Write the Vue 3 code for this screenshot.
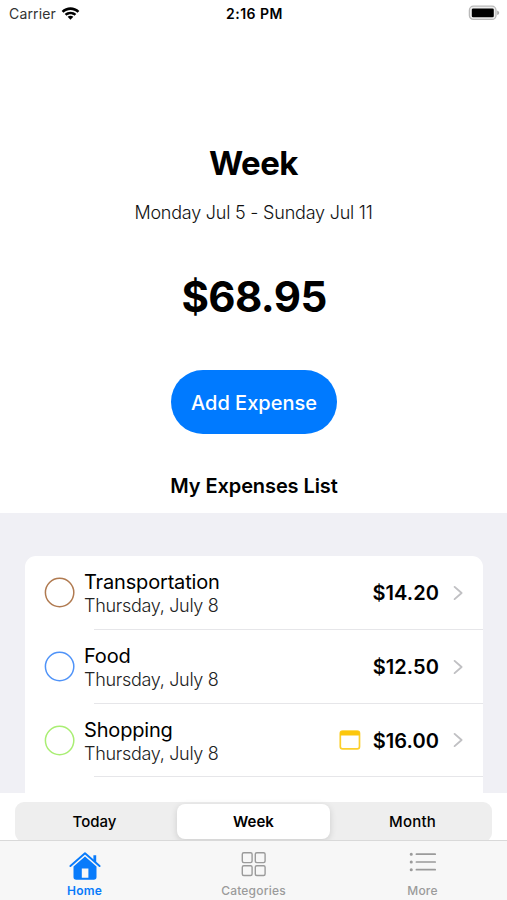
<script setup>
const expenses = [
  { name: 'Transportation', date: 'Thursday, July 8', amount: '$14.20', tone: 'brown', recurring: false },
  { name: 'Food', date: 'Thursday, July 8', amount: '$12.50', tone: 'blue', recurring: false },
  { name: 'Shopping', date: 'Thursday, July 8', amount: '$16.00', tone: 'green', recurring: true },
]
const periods = ['Today', 'Week', 'Month']
</script>

<template>
  <div class="screen">
    <header class="status">
      <div class="carrier">
        <span>Carrier</span>
        <svg class="wifi" viewBox="0 0 18 14" width="19" height="15">
          <path d="M0.6 4.6C5.2 0 12.8 0 17.4 4.6L15.6 6.4C11.9 2.9 6.1 2.9 2.4 6.4Z" />
          <path d="M3.5 7.4C6.5 4.5 11.5 4.5 14.5 7.4L12.7 9.2C10.7 7.3 7.3 7.3 5.3 9.2Z" />
          <path d="M6.3 10.1C7.8 8.8 10.2 8.8 11.7 10.1L9 12.9Z" />
        </svg>
      </div>
      <span class="time">2:16 PM</span>
      <svg class="battery" viewBox="0 0 32 16" width="32" height="16">
        <rect x="1.4" y="1.2" width="26.6" height="13.2" rx="4" fill="#eee" stroke="#b9b9b9" stroke-width="1.3" />
        <rect x="3.8" y="3.4" width="22" height="8.9" rx="1.4" fill="#000" />
        <path d="M29.2 5.5Q31.2 6.2 31.2 7.8T29.2 10.1Z" fill="#aaa" />
      </svg>
    </header>

    <section class="summary">
      <h1>Week</h1>
      <p class="range">Monday Jul 5 - Sunday Jul 11</p>
      <p class="total">$68.95</p>
      <button class="add">Add Expense</button>
      <h2>My Expenses List</h2>
    </section>

    <main class="list">
      <div class="card">
        <article v-for="e in expenses" :key="e.name" class="row">
          <svg class="ring" :class="e.tone" viewBox="0 0 31 31" width="31" height="31">
            <circle cx="15.6" cy="15.5" r="14.2" fill="none" stroke="currentColor" stroke-width="1.5" />
          </svg>
          <div class="body">
            <div class="name">{{ e.name }}</div>
            <div class="date">{{ e.date }}</div>
          </div>
          <svg v-if="e.recurring" class="calendar" viewBox="0 0 22 20" width="22" height="20">
            <rect x="1.3" y="1.1" width="19.2" height="17.8" rx="2.4" fill="#fff" stroke="#fccf2b" stroke-width="1.7" />
            <path d="M1 5.6V3.4Q1 1 3.6 1H18.2Q20.8 1 20.8 3.4V5.6Z" fill="#fcc70c" />
          </svg>
          <span class="amount">{{ e.amount }}</span>
          <svg class="chevron" viewBox="0 0 10 16" width="10" height="16">
            <path d="M1.6 1.9L8.6 8L1.6 14.1" fill="none" stroke="#c0c0c3" stroke-width="1.9" stroke-linecap="round" stroke-linejoin="round" />
          </svg>
        </article>
      </div>
    </main>

    <div class="periods">
      <div class="segments">
        <span v-for="p in periods" :key="p" class="segment" :class="{ selected: p === 'Week' }">{{ p }}</span>
      </div>
    </div>

    <nav class="tabs">
      <a class="tab active">
        <svg viewBox="0 0 32 30" width="32" height="30">
          <path d="M1.4 15L16 2.2L30.6 15" fill="none" stroke="#087bfb" stroke-width="1.9" stroke-linecap="round" stroke-linejoin="round" />
          <path d="M24.4 4.2H27.2V11.6L24.4 9.2Z" fill="#087bfb" />
          <path fill-rule="evenodd" d="M16 5.6L27.5 15.6V26Q27.5 28.7 24.8 28.7H7.2Q4.5 28.7 4.5 26V15.6ZM12.8 17.4V26.7H19.4V17.4Z" fill="#087bfb" />
        </svg>
        <span>Home</span>
      </a>
      <a class="tab">
        <svg viewBox="0 0 32 30" width="32" height="30" fill="none" stroke="#9b9b9b" stroke-width="1.4">
          <rect x="4.3" y="1.8" width="9.8" height="9.8" rx="1.5" />
          <rect x="17.3" y="1.8" width="9.8" height="9.8" rx="1.5" />
          <rect x="4.3" y="14.7" width="9.8" height="9.8" rx="1.5" />
          <rect x="17.3" y="14.7" width="9.8" height="9.8" rx="1.5" />
        </svg>
        <span>Categories</span>
      </a>
      <a class="tab">
        <svg viewBox="0 0 32 30" width="32" height="30" stroke="#9b9b9b" stroke-linecap="round">
          <path d="M9.4 3.2H28.2M9.4 11H28.2M9.4 18.7H28.2" stroke-width="1.7" />
          <path d="M4.2 3.2H4.3M4.2 11H4.3M4.2 18.7H4.3" stroke-width="3" />
        </svg>
        <span>More</span>
      </a>
    </nav>
  </div>
</template>

<style>
body { margin: 0; background: #fff; }
</style>

<style scoped>
* { box-sizing: border-box; }
.screen {
  width: 507px;
  height: 900px;
  display: flex;
  flex-direction: column;
  overflow: hidden;
  background: #fff;
  color: #000;
  font-family: Inter, "Liberation Sans", sans-serif;
  white-space: nowrap;
}
h1, h2, p { margin: 0; }
.status {
  height: 28px;
  padding: 0 7px 2px 9px;
  display: grid;
  grid-template-columns: 1fr auto 1fr;
  align-items: center;
  font-size: 14px;
}
.carrier { display: flex; align-items: center; gap: 5px; color: #333; letter-spacing: 0.15px; }
.wifi { fill: #000; }
.time { font-weight: 600; letter-spacing: 0.5px; }
.battery { justify-self: end; }
.summary {
  height: 485px;
  display: flex;
  flex-direction: column;
  align-items: center;
}
h1 { margin-top: 115px; font-size: 33px; line-height: 40px; font-weight: 700; letter-spacing: -0.55px; }
.range { margin-top: 18px; font-size: 18px; line-height: 24px; font-weight: 300; color: #111; letter-spacing: -0.22px; }
.total { margin-top: 47px; padding-left: 1px; font-size: 42px; line-height: 50px; font-weight: 700; letter-spacing: -0.6px; }
.add {
  margin-top: 48px;
  width: 166px;
  height: 64px;
  padding: 1px 0 0 1px;
  border: 0;
  border-radius: 32px;
  background: #007aff;
  color: #fff;
  font: 500 20px/24px Inter, "Liberation Sans", sans-serif;
}
h2 { margin-top: 40px; padding-left: 1px; font-size: 20px; line-height: 24px; font-weight: 600; letter-spacing: -0.1px; }
.list { height: 280px; padding: 43px 24px 0 25px; background: #f0f0f5; overflow: hidden; }
.card { height: 240px; border-radius: 11px 11px 0 0; background: #fff; }
.row {
  position: relative;
  height: 73.7px;
  padding: 0 20px 0 19px;
  display: flex;
  align-items: center;
}
.row::after {
  content: "";
  position: absolute;
  left: 69px;
  right: 0;
  bottom: -0.4px;
  height: 1.2px;
  background: #e6e6e9;
}
.ring { flex: none; }
.brown { color: #b07a50; }
.blue { color: #4f93f8; }
.green { color: #a9ee73; }
.body { flex: 1; margin-left: 9px; padding-top: 3px; }
.name { font-size: 20px; line-height: 23px; letter-spacing: -0.17px; }
.date { font-size: 18px; line-height: 23px; font-weight: 300; color: #222; letter-spacing: -0.3px; }
.calendar { margin-right: 12px; }
.amount { font-size: 20px; font-weight: 600; padding-top: 1px; letter-spacing: 0.08px; }
.chevron { margin-left: 14px; }
.periods { height: 47px; padding: 9px 15px 0; overflow: hidden; }
.segments {
  height: 40px;
  padding: 2px 2px 0;
  display: grid;
  grid-template-columns: 1fr 153px 1fr;
  column-gap: 2px;
  border-radius: 9px;
  background: #eee;
}
.segment { height: 35px; display: flex; align-items: center; justify-content: center; font-size: 15px; font-weight: 500; }
.segment:first-child { padding-right: 3px; }
.segment:last-child { padding-left: 3px; letter-spacing: 0.2px; }
.selected { border-radius: 8px; background: #fff; box-shadow: 0 2px 7px rgba(0, 0, 0, 0.14); font-weight: 600; }
.tabs {
  height: 60px;
  display: grid;
  grid-template-columns: repeat(3, 1fr);
  border-top: 1px solid #d9d9d9;
  background: #f7f7f7;
}
.tab { display: flex; flex-direction: column; align-items: center; padding-top: 10px; color: #9b9b9b; font-size: 12px; line-height: 14px; font-weight: 500; letter-spacing: 0.2px; }
.tab span { margin-top: 3px; }
.active { color: #087bfb; font-weight: 600; }
</style>
